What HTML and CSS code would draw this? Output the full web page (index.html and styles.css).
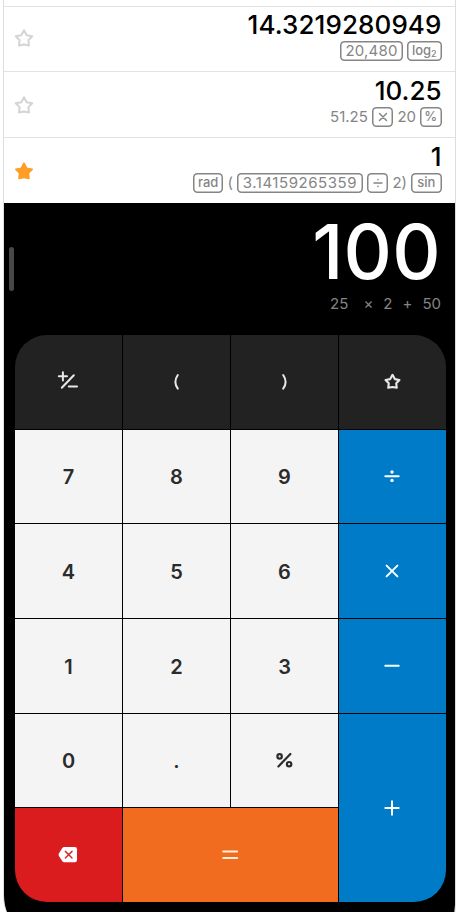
FILE: index.html
```html
<!DOCTYPE html>
<html lang="en">
<head>
<meta charset="utf-8">
<title>Calculator</title>
<link rel="stylesheet" href="styles.css">
</head>
<body>
<svg class="defs" width="0" height="0" aria-hidden="true">
  <symbol id="star" viewBox="0 0 20 20"><path d="M10 2.2 12.7 7.2 18.2 8.2 14.4 12.1 15 17.4 10 16.5 5 17.4 5.6 12.1 1.8 8.2 7.3 7.2Z" stroke-linejoin="round"/></symbol>
</svg>
<main class="phone">
  <ol class="history">
    <li class="entry">
      <svg class="star"><use href="#star"/></svg>
      <div class="calc">
        <div class="result long">14.3219280949</div>
        <div class="expr"><span class="chip num w63">20,480</span><span class="chip w35">log<small>2</small></span></div>
      </div>
    </li>
    <li class="entry">
      <svg class="star"><use href="#star"/></svg>
      <div class="calc">
        <div class="result">10.25</div>
        <div class="expr"><span>51.25</span><span class="chip w21"><svg class="mini" viewBox="0 0 10 10"><path d="M1.5 1.5 8.5 8.5M8.5 1.5 1.5 8.5"/></svg></span><span>20</span><span class="chip w21">%</span></div>
      </div>
    </li>
    <li class="entry">
      <svg class="star on"><use href="#star"/></svg>
      <div class="calc">
        <div class="result">1</div>
        <div class="expr"><span class="chip w30">rad</span><span>(</span><span class="chip num wide w126">3.14159265359</span><span class="chip w21"><svg class="mini" viewBox="0 0 10 10"><path d="M1 5H9M5 1.4v.4M5 8.2v.4"/></svg></span><span>2)</span><span class="chip w30">sin</span></div>
      </div>
    </li>
  </ol>
  <section class="calculator">
    <div class="display">
      <i class="handle"></i>
      <div class="total">100</div>
      <div class="current"><span>25</span><span class="times">×</span><span>2</span><span>+</span><span>50</span></div>
    </div>
    <div class="keypad">
      <button class="key dark"><svg viewBox="0 0 24 24"><path d="M2.8 6.2H11M6.9 2.2V10.4M17.8 5.2 5.8 17.8M12.8 16.6H21"/></svg></button>
      <button class="key dark"><svg viewBox="0 0 24 24"><path d="M13.8 5Q9 12 13.8 18.6"/></svg></button>
      <button class="key dark"><svg viewBox="0 0 24 24"><path d="M11.2 5Q16 12 11.2 18.6"/></svg></button>
      <button class="key dark"><svg class="key-star" viewBox="0 0 20 20"><use href="#star"/></svg></button>
      <button class="key">7</button><button class="key">8</button><button class="key">9</button>
      <button class="key blue"><svg viewBox="0 0 24 24"><path d="M5.3 12.2H18.7"/><circle class="dot" cx="12" cy="8" r="1.7"/><circle class="dot" cx="12" cy="16.4" r="1.7"/></svg></button>
      <button class="key">4</button><button class="key">5</button><button class="key">6</button>
      <button class="key blue"><svg viewBox="0 0 24 24"><path d="M6.6 6.6 17.4 17.4M17.4 6.6 6.6 17.4"/></svg></button>
      <button class="key">1</button><button class="key">2</button><button class="key">3</button>
      <button class="key blue"><svg viewBox="0 0 24 24"><path d="M5.3 11.7H18.7"/></svg></button>
      <button class="key">0</button><button class="key">.</button>
      <button class="key"><svg class="percent" viewBox="0 0 24 24"><path d="M18.4 6 6.4 18.4"/><circle cx="7.6" cy="8.4" r="2.2"/><circle cx="17.1" cy="16.2" r="2.2"/></svg></button>
      <button class="key blue tall"><svg viewBox="0 0 24 24"><path d="M5.3 12H18.7M12 5.3V18.7"/></svg></button>
      <button class="key red"><svg viewBox="0 0 24 24"><path class="body" d="M8.2 4H18.8Q21 4 21 6.2V17Q21 19.2 18.8 19.2H8.2Q7 19.2 6.2 18L2.9 13Q2.2 11.8 2.9 10.4L6.2 5.2Q7 4 8.2 4Z"/><path class="cross" d="M9.4 8.4 16 15M16 8.4 9.4 15"/></svg></button>
      <button class="key orange"><svg viewBox="0 0 24 24"><path d="M5.2 8.6H19.2M5.2 15.1H19.2"/></svg></button>
    </div>
  </section>
</main>
</body>
</html>
```

FILE: styles.css
```css
* { box-sizing: border-box; }

body {
  margin: 0;
  background: #fff;
  font-family: Inter, "Liberation Sans", sans-serif;
  overflow: hidden;
}

.defs { display: none; }

.phone {
  width: 453px;
  height: 945px;
  margin-left: 3px;
  border: 1px solid #ddd;
  border-bottom: 0;
  border-top: 0;
  border-radius: 0 0 40px 50px;
  overflow: hidden;
  background: #fff;
}

.history {
  list-style: none;
  margin: 0;
  padding: 6px 0 0;
}

.entry {
  display: flex;
  justify-content: space-between;
  height: 66px;
  border-top: 1px solid #e2e2e2;
  padding: 1px 13.5px 0 10px;
}

.entry:first-child { height: 65px; padding-top: 0; }

.star {
  width: 20px;
  height: 20px;
  margin-top: 21.5px;
  fill: none;
  stroke: #d4d4d4;
  stroke-width: 2;
}

.entry:first-child .star { margin-top: 21px; }
.star.on { fill: #ff9d26; stroke: #ff9d26; stroke-width: 1.6; }

.calc {
  display: flex;
  flex-direction: column;
  align-items: flex-end;
}

.result {
  height: 34px;
  font-size: 26px;
  line-height: 36px;
  font-weight: 500;
  color: #000;
}

.result.long { letter-spacing: .1px; line-height: 35px; }

.expr {
  display: flex;
  gap: 4px;
  height: 20px;
  line-height: 20px;
  font-size: 15px;
  color: #858585;
}

.chip {
  display: flex;
  align-items: center;
  justify-content: center;
  height: 19.5px;
  box-shadow: inset 0 0 0 1.5px #858585;
  border-radius: 4.5px;
  font-size: 13px;
  font-weight: 500;
  line-height: 19px;
}

.chip.num { font-size: 15px; font-weight: 400; letter-spacing: .2px; }
.chip.wide { letter-spacing: .55px; }
.chip small { font-size: 9px; align-self: flex-end; line-height: 14px; }
.w21 { width: 21.5px; }
.w30 { width: 30.5px; }
.w35 { width: 34.5px; }
.w63 { width: 63px; }
.w126 { width: 126px; }

.mini {
  width: 10px;
  height: 10px;
  fill: none;
  stroke: #858585;
  stroke-width: 1.5;
  stroke-linecap: round;
}

.calculator {
  height: 742px;
  background: #000;
}

.display {
  position: relative;
  height: 132px;
  padding: 11px 14px 0 0;
  text-align: right;
  color: #fff;
}

.handle {
  position: absolute;
  left: 5px;
  top: 44px;
  width: 5px;
  height: 44px;
  border-radius: 3px;
  background: #484848;
}

.total {
  height: 75px;
  line-height: 75px;
  font-size: 75px;
  font-weight: 500;
  letter-spacing: .3px;
}

.current {
  display: flex;
  justify-content: flex-end;
  gap: 10px;
  padding-top: 4.5px;
  font-size: 15px;
  line-height: 20px;
  color: #858585;
}

.times { padding-left: 5px; }

.keypad {
  display: grid;
  grid-template-columns: repeat(4, 107px);
  grid-template-rows: repeat(6, 1fr);
  gap: 1px;
  width: 431px;
  height: 567px;
  margin-left: 11px;
  border-radius: 32px;
  overflow: hidden;
}

.key {
  display: flex;
  align-items: center;
  justify-content: center;
  margin: 0;
  padding: 1.5px 0 0;
  border: 0;
  background: #f4f4f4;
  color: #2b2b2b;
  font: 600 20px Inter, sans-serif;
}

.key svg {
  width: 24px;
  height: 24px;
  margin: -1.5px 1px 0 0;
  fill: none;
  stroke: #fff;
  stroke-width: 2;
  stroke-linecap: round;
  stroke-linejoin: round;
}

.key.dark { background: #222; }
.key.dark svg { stroke: #e8e8e8; }
.key .key-star { width: 17px; height: 17px; stroke-width: 2.5; }
.key.blue { background: #007bc8; }
.key.tall { grid-row: span 2; }
.key.red { background: #da1c1f; }
.key.orange { grid-column: span 2; background: #f26c1f; }
.key.orange svg { stroke: #fff1dc; }
.key .dot { fill: #fff; stroke: none; }
.key .percent { stroke: #2b2b2b; stroke-width: 2.2; }
.key .body { fill: #fff; stroke: none; }
.key .cross { stroke: #ce3436; stroke-width: 1.5; }
```
